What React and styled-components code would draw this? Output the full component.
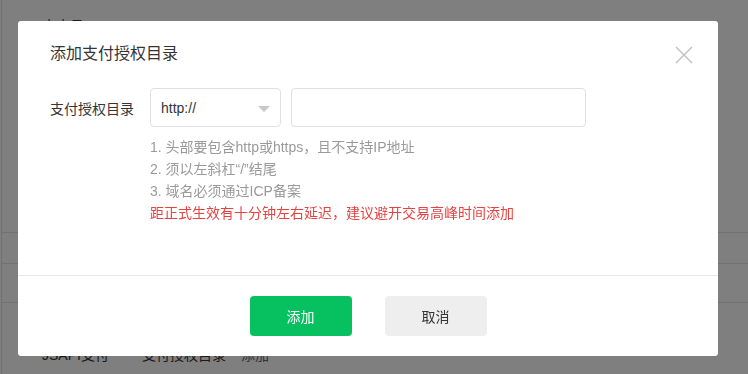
import React from "react";
import styled, { createGlobalStyle } from "styled-components";

const Global = createGlobalStyle`
  html, body { margin: 0; padding: 0; }
  body {
    font-family: "Liberation Sans", "Noto Sans CJK SC", sans-serif;
    font-size: 14px;
    color: #353535;
    background: #fff;
  }
  * { box-sizing: border-box; }
`;

const Page = styled.div`
  min-height: 100vh;
  margin-left: 1px;
  border-left: 1px solid #e2e2e2;
  background: #fff;
`;

const InfoRow = styled.div`
  display: flex;
  align-items: flex-start;
  height: ${(p) => p.$h}px;
  padding: ${(p) => p.$pt || 0}px 42px 0 40px;
  border-bottom: ${(p) => (p.$line ? "1px solid #e5e5e5" : "none")};
  line-height: 16px;
`;

const InfoLabel = styled.div`
  width: 100px;
  flex: none;
`;

const InfoValue = styled.div`
  color: #353535;
`;

const InfoLink = styled.a`
  color: #576b95;
  margin-left: 15px;
`;

const Mask = styled.div`
  position: fixed;
  inset: 0;
  background: rgba(0, 0, 0, 0.5);
  padding: 21px 0 0 18px;
`;

const Dialog = styled.div`
  position: relative;
  width: 700px;
  height: 335px;
  background: #fff;
  border-radius: 3px;
  display: flex;
  flex-direction: column;
`;

const Body = styled.div`
  height: 255px;
  padding: 21px 32px 0 32px;
  border-bottom: 1px solid #e7e7e7;
`;

const Title = styled.h3`
  margin: 0;
  font-size: 16px;
  font-weight: normal;
  line-height: 24px;
  color: #353535;
`;

const Close = styled.button`
  position: absolute;
  top: 25px;
  right: 25px;
  width: 18px;
  height: 18px;
  padding: 0;
  border: none;
  background: none;
  cursor: pointer;
  display: flex;
  align-items: center;
  justify-content: center;
`;

const FormRow = styled.div`
  display: flex;
  align-items: center;
  margin-top: 22px;
`;

const Label = styled.label`
  width: 100px;
  flex: none;
  color: #353535;
  font-size: 14px;
`;

const Select = styled.div`
  width: 131px;
  height: 39px;
  border: 1px solid #e0e0e0;
  border-radius: 4px;
  display: flex;
  align-items: center;
  justify-content: space-between;
  padding: 0 10px 0 10px;
  color: #353535;
  font-size: 14px;
`;

const Arrow = styled.span`
  width: 0;
  height: 0;
  border-left: 6px solid transparent;
  border-right: 6px solid transparent;
  border-top: 6px solid #c8c8c8;
  margin-top: 2px;
`;

const Input = styled.input`
  width: 295px;
  height: 39px;
  margin-left: 10px;
  border: 1px solid #e0e0e0;
  border-radius: 4px;
  outline: none;
  padding: 0 10px;
  font: inherit;
`;

const Hints = styled.div`
  margin: 9px 0 0 100px;
  font-size: 14px;
  line-height: 22px;
`;

const Hint = styled.div`
  color: ${(p) => (p.$warn ? "#e64340" : "#9a9a9a")};
`;

const Footer = styled.div`
  flex: 1;
  display: flex;
  justify-content: center;
  align-items: center;
  gap: 33px;
`;

const Button = styled.button`
  width: 102px;
  height: 40px;
  border: none;
  border-radius: 4px;
  font-family: inherit;
  font-size: 14px;
  cursor: pointer;
  background: ${(p) => (p.$primary ? "#07c160" : "#eeeeee")};
  color: ${(p) => (p.$primary ? "#ffffff" : "#353535")};
`;

export default function App() {
  return (
    <>
      <Global />
      <Page>
        <InfoRow $h={233} $pt={18} $line>
          <InfoLabel>商户号</InfoLabel>
          <InfoValue>1254950005</InfoValue>
        </InfoRow>
        <InfoRow $h={31} $line />
        <InfoRow $h={39} $line />
        <InfoRow $h={72} $pt={44}>
          <InfoLabel>JSAPI支付</InfoLabel>
          <InfoValue>支付授权目录</InfoValue>
          <InfoLink>添加</InfoLink>
        </InfoRow>
      </Page>
      <Mask>
        <Dialog>
          <Body>
            <Title>添加支付授权目录</Title>
            <FormRow>
              <Label>支付授权目录</Label>
              <Select>
                <span>http://</span>
                <Arrow />
              </Select>
              <Input type="text" />
            </FormRow>
            <Hints>
              <Hint>1. 头部要包含http或https，且不支持IP地址</Hint>
              <Hint>2. 须以左斜杠“/”结尾</Hint>
              <Hint>3. 域名必须通过ICP备案</Hint>
              <Hint $warn>距正式生效有十分钟左右延迟，建议避开交易高峰时间添加</Hint>
            </Hints>
          </Body>
          <Close aria-label="关闭">
            <svg width="18" height="18" viewBox="0 0 18 18">
              <path d="M1 1 L17 17 M17 1 L1 17" stroke="#c4c4c4" strokeWidth="1.6" />
            </svg>
          </Close>
          <Footer>
            <Button $primary>添加</Button>
            <Button>取消</Button>
          </Footer>
        </Dialog>
      </Mask>
    </>
  );
}
